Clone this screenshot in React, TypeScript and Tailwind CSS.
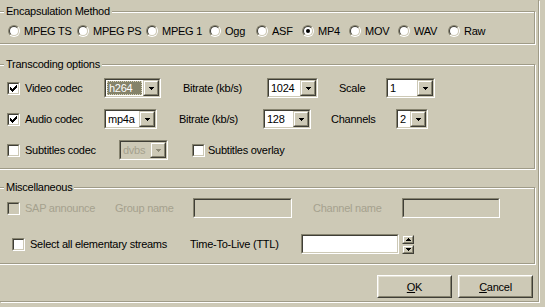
import type { ReactNode } from "react";

// Windows classic style dialog, olive-ish 3D face
const FACE = "bg-[#cdc9b6]";

function Sunken({
  className = "",
  disabled = false,
  children,
}: {
  className?: string;
  disabled?: boolean;
  children?: ReactNode;
}) {
  return (
    <div
      className={`shrink-0 border border-t-[#86836f] border-l-[#86836f] border-b-white border-r-white ${className}`}
    >
      <div
        className={`h-full border border-t-[#3f3e36] border-l-[#3f3e36] border-b-[#cdc9b6] border-r-[#cdc9b6] ${
          disabled ? FACE : "bg-white"
        }`}
      >
        {children}
      </div>
    </div>
  );
}

function Raised({ className = "", children }: { className?: string; children?: ReactNode }) {
  return (
    <div
      className={`shrink-0 border border-t-[#cdc9b6] border-l-[#cdc9b6] border-b-[#3f3e36] border-r-[#3f3e36] ${className}`}
    >
      <div
        className={`flex h-full items-center justify-center border border-t-white border-l-white border-b-[#86836f] border-r-[#86836f] ${FACE}`}
      >
        {children}
      </div>
    </div>
  );
}

function Arrow({ up = false, disabled = false }: { up?: boolean; disabled?: boolean }) {
  return (
    <svg width="5" height="3" viewBox="0 0 5 3" shapeRendering="crispEdges" className={up ? "rotate-180" : ""}>
      <path d="M0 0h5v1h-1v1h-1v1h-1v-1h-1v-1h-1z" fill={disabled ? "#8e8b78" : "#000"} />
    </svg>
  );
}

function Combo({
  width,
  value,
  selected = false,
  disabled = false,
}: {
  width: string;
  value: string;
  selected?: boolean;
  disabled?: boolean;
}) {
  return (
    <Sunken className={`h-[20px] ${width}`} disabled={disabled}>
      <div className="flex h-full">
        {selected ? (
          <div className="m-[1px] flex flex-1 items-center border border-dotted border-[#d8d4b8] bg-[#85836a] pl-[1px] text-white">
            {value}
          </div>
        ) : (
          <div className={`flex flex-1 items-center pl-[2px] ${disabled ? "text-[#a5a18e]" : ""}`}>{value}</div>
        )}
        <Raised className="h-full w-[16px]">
          <Arrow disabled={disabled} />
        </Raised>
      </div>
    </Sunken>
  );
}

function Check({ checked = false, disabled = false }: { checked?: boolean; disabled?: boolean }) {
  return (
    <Sunken className="h-[13px] w-[13px]" disabled={disabled}>
      {checked && (
        <svg width="9" height="9" viewBox="0 0 9 9" shapeRendering="crispEdges">
          <path
            d="M1 3h1v3h-1z M2 4h1v3h-1z M3 5h1v3h-1z M4 4h1v3h-1z M5 3h1v3h-1z M6 2h1v3h-1z M7 1h1v3h-1z"
            fill="#000"
          />
        </svg>
      )}
    </Sunken>
  );
}

function Radio({ checked = false }: { checked?: boolean }) {
  return (
    <div className="h-[12px] w-[12px] shrink-0 rounded-full border border-t-[#86836f] border-l-[#86836f] border-b-white border-r-white">
      <div className="flex h-full w-full items-center justify-center rounded-full border border-t-[#3f3e36] border-l-[#3f3e36] border-b-[#cdc9b6] border-r-[#cdc9b6] bg-white">
        {checked && <div className="h-[4px] w-[4px] rounded-full bg-black" />}
      </div>
    </div>
  );
}

function Group({
  title,
  height,
  className = "",
  children,
}: {
  title: string;
  height: string;
  className?: string;
  children: ReactNode;
}) {
  return (
    <div
      className={`relative -ml-1 w-[539px] shrink-0 border border-[#9f9b87] shadow-[inset_1px_1px_0_#fff,1px_1px_0_#fff] ${height} ${className}`}
    >
      <span className={`absolute left-[7px] top-[-8px] px-[2px] leading-[14px] ${FACE}`}>{title}</span>
      {children}
    </div>
  );
}

function Button({ children }: { children: ReactNode }) {
  return (
    <div className="h-[23px] w-[75px] border border-t-white border-l-white border-b-[#3f3e36] border-r-[#3f3e36]">
      <div className="flex h-full items-center justify-center border border-t-[#e4e1d4] border-l-[#e4e1d4] border-b-[#86836f] border-r-[#86836f]">
        {children}
      </div>
    </div>
  );
}

const encapsulations: { label: string; width: string; checked?: boolean }[] = [
  { label: "MPEG TS", width: "w-[69px]" },
  { label: "MPEG PS", width: "w-[69px]" },
  { label: "MPEG 1", width: "w-[63px]" },
  { label: "Ogg", width: "w-[47px]" },
  { label: "ASF", width: "w-[46px]" },
  { label: "MP4", width: "w-[47px]", checked: true },
  { label: "MOV", width: "w-[49px]" },
  { label: "WAV", width: "w-[50px]" },
  { label: "Raw", width: "w-[50px]" },
];

export default function App() {
  return (
    <div
      className={`h-[307px] w-[545px] overflow-hidden font-['Tahoma','Liberation_Sans',sans-serif] text-[11px] leading-[14px] tracking-[-0.25px] text-black ${FACE}`}
    >
      <div className="flex h-[302px] w-[539px] flex-col border-b border-r border-[#9f9b87] shadow-[1px_1px_0_#fff]">
        {/* Encapsulation */}
        <Group title="Encapsulation Method" height="h-[33px]" className="mt-[11px]">
          <div className="flex pl-[11px] pt-[12px]">
            {encapsulations.map((e) => (
              <div key={e.label} className={`flex shrink-0 items-center gap-[4px] ${e.width}`}>
                <Radio checked={e.checked} />
                <span className="whitespace-nowrap">{e.label}</span>
              </div>
            ))}
          </div>
        </Group>

        {/* Transcoding */}
        <Group title="Transcoding options" height="h-[105px]" className="mt-[20px]">
          <div className="flex flex-col pl-[10px] pt-[13px]">
            <div className="flex h-[20px] items-center">
              <div className="flex w-[97px] shrink-0 items-center gap-[5px]">
                <Check checked />
                <span>Video codec</span>
              </div>
              <Combo width="w-[57px]" value="h264" selected />
              <span className="w-[106px] shrink-0 pl-[22px] whitespace-nowrap">Bitrate (kb/s)</span>
              <Combo width="w-[51px]" value="1024" />
              <span className="w-[68px] shrink-0 pl-[21px]">Scale</span>
              <Combo width="w-[49px]" value="1" />
            </div>
            <div className="mt-[11px] flex h-[20px] items-center">
              <div className="flex w-[97px] shrink-0 items-center gap-[5px]">
                <Check checked />
                <span>Audio codec</span>
              </div>
              <Combo width="w-[53px]" value="mp4a" />
              <span className="w-[106px] shrink-0 pl-[22px] whitespace-nowrap">Bitrate (kb/s)</span>
              <Combo width="w-[48px]" value="128" />
              <span className="w-[85px] shrink-0 pl-[20px]">Channels</span>
              <Combo width="w-[32px]" value="2" />
            </div>
            <div className="mt-[11px] flex h-[20px] items-center">
              <div className="flex w-[112px] shrink-0 items-center gap-[5px]">
                <Check />
                <span>Subtitles codec</span>
              </div>
              <Combo width="w-[49px]" value="dvbs" disabled />
              <div className="ml-[24px] flex items-center gap-[3px]">
                <Check />
                <span>Subtitles overlay</span>
              </div>
            </div>
          </div>
        </Group>

        {/* Miscellaneous */}
        <Group title="Miscellaneous" height="h-[77px]" className="mt-[18px]">
          <div className="flex flex-col pl-[10px] pt-[10px]">
            <div className="flex h-[20px] items-center text-[#a5a18e]">
              <div className="flex w-[108px] shrink-0 items-center gap-[5px]">
                <Check disabled />
                <span>SAP announce</span>
              </div>
              <span className="w-[78px] shrink-0">Group name</span>
              <Sunken className="h-[20px] w-[99px]" disabled />
              <span className="w-[110px] shrink-0 pl-[21px]">Channel name</span>
              <Sunken className="h-[20px] w-[98px]" disabled />
            </div>
            <div className="mt-[16px] flex h-[20px] items-center">
              <div className="ml-[5px] flex w-[178px] shrink-0 items-center gap-[5px]">
                <Check />
                <span className="whitespace-nowrap">Select all elementary streams</span>
              </div>
              <span className="w-[111px] shrink-0 whitespace-nowrap">Time-To-Live (TTL)</span>
              <Sunken className="h-[20px] w-[98px]" />
              <div className="ml-[3px] flex flex-col gap-px">
                <Raised className="h-[9px] w-[12px]">
                  <Arrow up />
                </Raised>
                <Raised className="h-[9px] w-[12px]">
                  <Arrow />
                </Raised>
              </div>
            </div>
          </div>
        </Group>

        {/* Buttons */}
        <div className="mt-[11px] flex justify-end gap-[6px] pr-[5px]">
          <Button>
            <span>
              <span className="underline">O</span>K
            </span>
          </Button>
          <Button>
            <span>
              <span className="underline">C</span>ancel
            </span>
          </Button>
        </div>
      </div>
    </div>
  );
}
